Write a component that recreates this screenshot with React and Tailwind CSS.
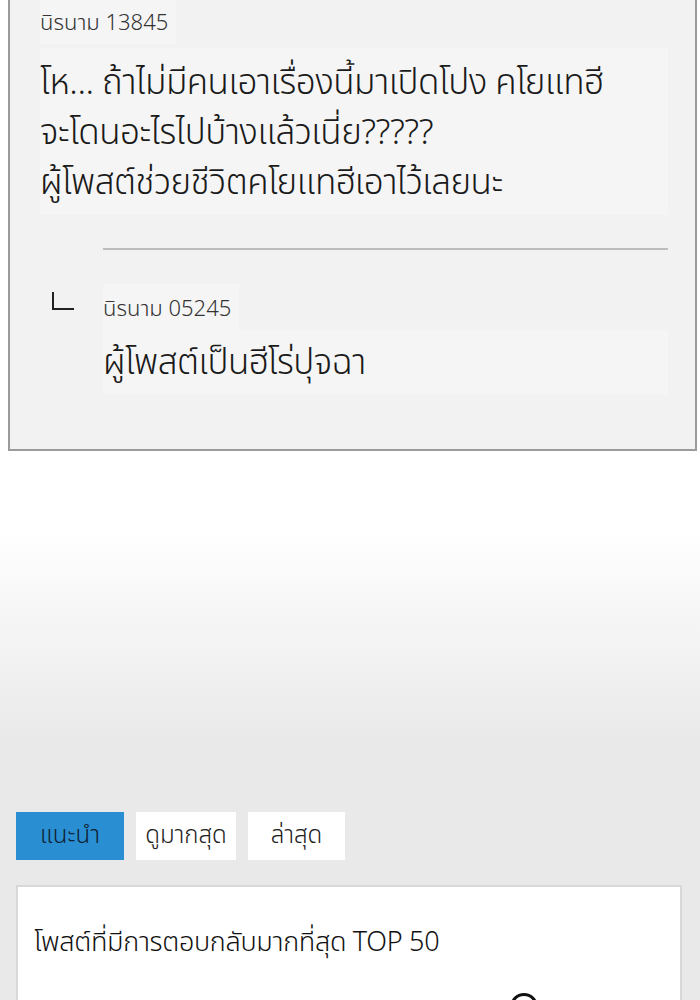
import React from 'react';

const thai = { fontFamily: '"Noto Sans Thai", "Noto Sans", "DejaVu Sans", sans-serif' };

const tabs = [
  { label: 'แนะนำ', active: true, w: 'w-[108px]' },
  { label: 'ดูมากสุด', active: false, w: 'w-[100px]' },
  { label: 'ล่าสุด', active: false, w: 'w-[97px]' },
];

const App = () => {
  return (
    <div className="w-[700px] h-[1000px] overflow-hidden bg-white text-[#1a1a1a] font-light" style={thai}>
      {/* comment panel */}
      <div className="pl-2 pr-[3px]">
        <div className="h-[451px] bg-[#f2f2f2] border-x-2 border-b-2 border-[#9b9b9b] pl-[30px] pr-[27px]">
          <div className="inline-block bg-[#f5f5f5] pr-2 h-[44px] pt-[9px] text-[22px] leading-[30px] text-[#333]">
            นิรนาม 13845
          </div>
          <div className="mt-[4px] bg-[#f5f5f5] pt-[11px] h-[167px] text-[35px] leading-[50px] tracking-[-0.5px]">
            <p>โห... ถ้าไม่มีคนเอาเรื่องนี้มาเปิดโปง คโยแทฮี</p>
            <p>จะโดนอะไรไปบ้างแล้วเนี่ย?????</p>
            <p>ผู้โพสต์ช่วยชีวิตคโยแทฮีเอาไว้เลยนะ</p>
          </div>
          <div className="ml-[63px] mt-[33px] border-t-2 border-[#bdbdbd]" />
          <div className="flex mt-[34px]">
            <div className="w-[63px] pl-[12px] pt-[8px]">
              <div className="w-[22px] h-[18px] border-l-2 border-b-2 border-[#222]" />
            </div>
            <div className="flex-1">
              <div className="inline-block bg-[#f5f5f5] pr-2 h-[46px] pt-[11px] text-[22px] leading-[30px] text-[#333]">
                นิรนาม 05245
              </div>
              <div className="bg-[#f5f5f5] h-[64px] pt-[9px] text-[35px] leading-[50px] tracking-[-0.5px]">
                ผู้โพสต์เป็นฮีโร่ปุจฉา
              </div>
            </div>
          </div>
        </div>
      </div>

      {/* fading area */}
      <div className="h-[361px] bg-[linear-gradient(to_bottom,#ffffff_22%,#e9e9e9_80%)]" />

      <div className="bg-[#e9e9e9] h-[188px] px-4">
        <div className="flex gap-3">
          {tabs.map((t) => (
            <div
              key={t.label}
              className={`${t.w} h-[48px] flex items-center justify-center text-[24px] ${
                t.active ? 'bg-[#2a8fd2] text-[#0e2233]' : 'bg-white text-[#222]'
              }`}
            >
              {t.label}
            </div>
          ))}
        </div>

        <div className="mt-[25px] w-[666px] h-[140px] bg-white border-2 border-[#d8d8d8] px-[16px] pt-[38px]">
          <p className="text-[27px] leading-[36px] text-[#111] tracking-[-0.3px]">
            โพสต์ที่มีการตอบกลับมากที่สุด TOP 50
          </p>
          <div className="ml-[476px] mt-[32px] w-[28px] h-[28px] rounded-full border-[3px] border-[#111]" />
        </div>
      </div>
    </div>
  );
};

export default App;
